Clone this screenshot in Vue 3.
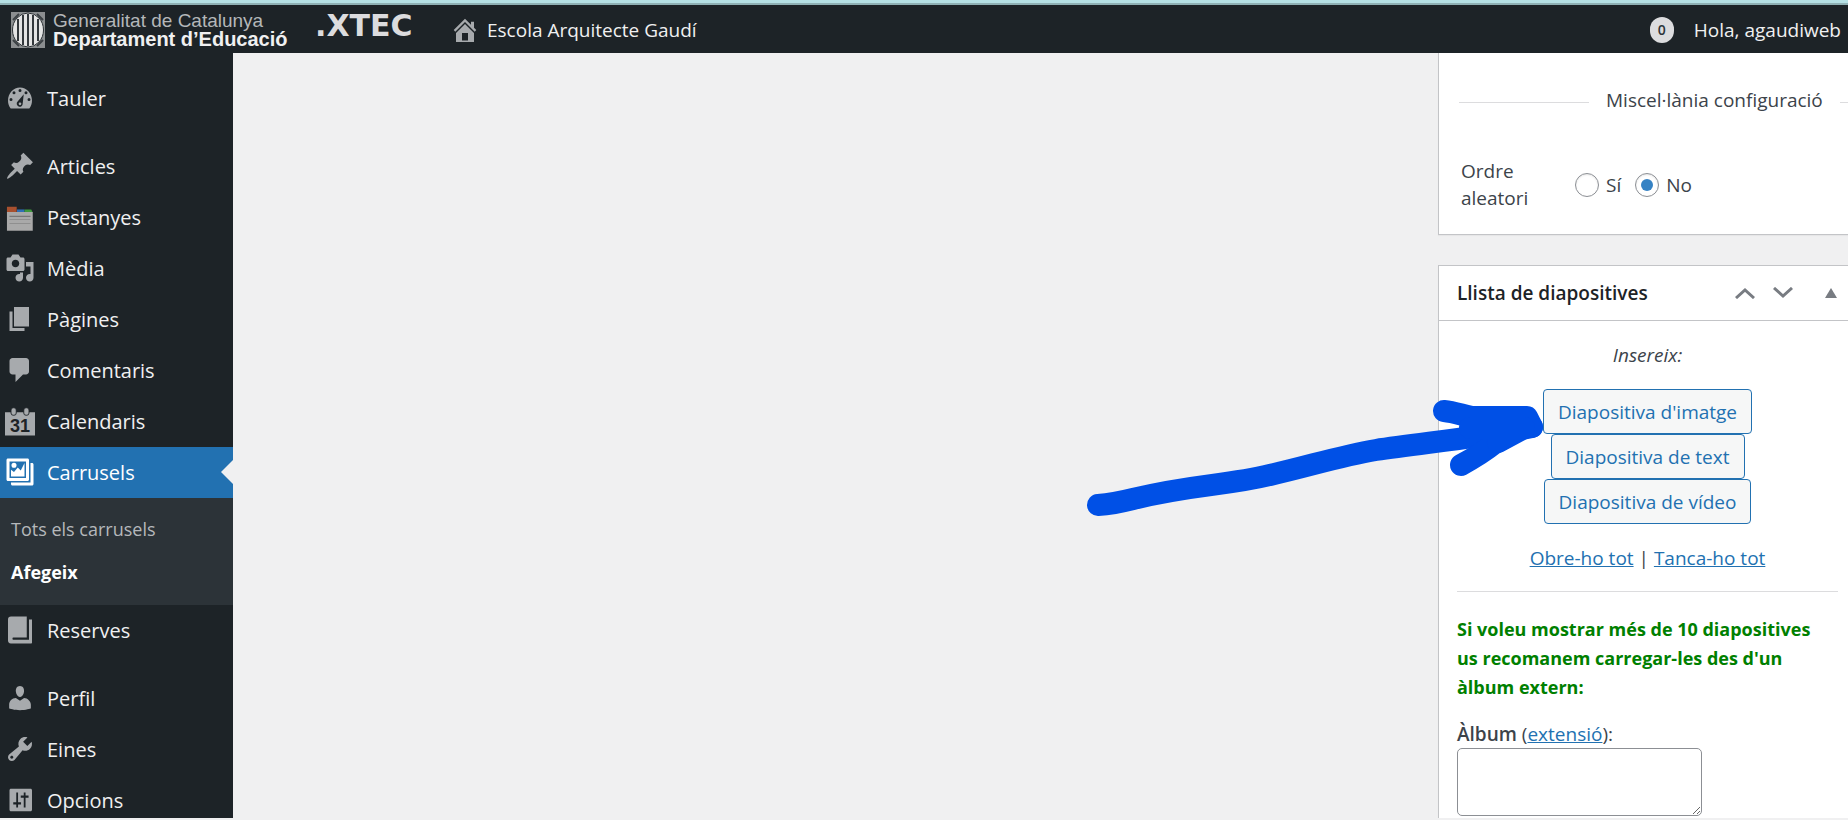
<template>
  <div class="page">
    <header class="adminbar">
      <a href="#" class="brand">
        <svg class="shield" viewBox="0 0 34 36" aria-hidden="true">
          <rect width="34" height="36" fill="#8b8e90" />
          <path d="M2 8L8 2M26 2l6 6M2 28l6 6M26 34l6-6" stroke="#3c4145" stroke-width="2" />
          <ellipse cx="17" cy="18" rx="15.5" ry="17" fill="#e4e4e4" stroke="#2b3034" />
          <path d="M7 7v22M12 3v30M17 2v32M22 3v30M27 7v22" stroke="#33383c" stroke-width="2" />
        </svg>
        <span class="brand-text">
          <span>Generalitat de Catalunya</span>
          <b>Departament d’Educació</b>
        </span>
      </a>
      <a href="#" class="xtec">.XTEC</a>
      <a href="#" class="site">
        <svg class="home" viewBox="0 0 20 20" aria-hidden="true">
          <path fill-rule="evenodd" d="M16 8.5l1.53 1.53-1.06 1.06L10 4.6l-6.47 6.49-1.06-1.06L10 2.5l4 4v-2h2v4zm-6-2.46l6 5.99V18H4v-5.97zM12 17v-5H8v5h4z" />
        </svg>
        Escola Arquitecte Gaudí
      </a>
      <div class="account">
        <span class="badge">0</span>
        <a href="#">Hola, agaudiweb</a>
      </div>
    </header>

    <div class="body">
      <nav class="menu">
        <template v-for="item in menu" :key="item.label">
          <a href="#" class="menu-item" :class="{ current: item.children, spaced: item.spaced }">
            <svg class="icon" :class="{ glyph: icons[item.icon] }" viewBox="0 0 20 20" aria-hidden="true">
              <template v-if="item.icon === 'tabs'">
                <path fill="#a8502f" d="M1.300 2.500h6.500v4H1.300z" />
                <path fill="#2f6fb5" d="M8 4.300h5v2H8z" />
                <path fill="#3f9a3f" d="M13 4.300h4.500l1 2H13z" />
                <path fill="#a9a9a9" d="M1.300 6h17.200v12.500H1.300z" />
                <path fill="#777" d="M3 8.500h14v.8H3zM3 11h14v.3H3zM3 13.500h14v.3H3z" />
              </template>
              <template v-else-if="item.icon === 'calendar'">
                <path fill="#a7aaad" d="M0 3.500h20V19H0z" />
                <rect x="4" y=".5" width="3.5" height="5" rx="1.5" fill="#a7aaad" stroke="#1d2327" stroke-width=".6" />
                <rect x="12.5" y=".5" width="3.5" height="5" rx="1.5" fill="#a7aaad" stroke="#1d2327" stroke-width=".6" />
                <text x="10" y="16.5" text-anchor="middle" class="day">31</text>
              </template>
              <path v-else fill-rule="evenodd" :d="icons[item.icon]" />
            </svg>
            <span>{{ item.label }}</span>
          </a>
          <div v-if="item.children" class="submenu">
            <a v-for="child in item.children" :key="child" href="#" :class="{ active: child === 'Afegeix' }">{{ child }}</a>
          </div>
        </template>
      </nav>

      <main class="content"></main>

      <aside class="side">
        <section class="box settings">
          <div class="legend"><span>Miscel·lània configuració</span></div>
          <div class="field" role="radiogroup" aria-labelledby="random-label">
            <span id="random-label" class="field-label">Ordre aleatori</span>
            <label><input v-model="random" type="radio" name="random" value="yes" />Sí</label>
            <label><input v-model="random" type="radio" name="random" value="no" />No</label>
          </div>
        </section>

        <section class="box slides">
          <div class="box-head">
            <h2>Llista de diapositives</h2>
            <button type="button" aria-label="Mou amunt">
              <svg viewBox="0 0 20 12"><path d="M1 11l9-8 9 8" /></svg>
            </button>
            <button type="button" aria-label="Mou avall">
              <svg viewBox="0 0 20 12"><path d="M1 1l9 8 9-8" /></svg>
            </button>
            <button type="button" class="toggle" aria-label="Commuta el quadre">
              <svg viewBox="0 0 12 10"><path d="M6 0l6 10H0z" /></svg>
            </button>
          </div>
          <div class="inside">
            <p class="insert">Insereix:</p>
            <div class="buttons">
              <button v-for="kind in kinds" :key="kind" type="button">{{ kind }}</button>
            </div>
            <p class="links"><a href="#">Obre-ho tot</a> | <a href="#">Tanca-ho tot</a></p>
            <hr />
            <p class="notice">Si voleu mostrar més de 10 diapositives us recomanem carregar-les des d'un àlbum extern:</p>
            <div class="album">
              <div><label for="album">Àlbum</label> (<a href="#">extensió</a>):</div>
              <textarea id="album" v-model="album"></textarea>
            </div>
          </div>
        </section>
      </aside>
    </div>

    <svg class="arrow" viewBox="1086 398 460 120" aria-hidden="true">
      <path d="M1098 505C1112 504 1121 502 1133 499C1195 484 1225 486 1270 475C1310 466 1340 456 1376 450C1420 443 1480 438 1532 427" />
      <path d="M1444 411C1454 412 1462 415 1472 417H1527L1532 427H1522C1510 434 1504 439 1495 443C1485 451 1474 458 1461 465" />
      <path d="M1470 428h54l-26 14" />
    </svg>
  </div>
</template>

<script setup>
import { ref } from "vue";

const random = ref("no");
const album = ref("");

const kinds = ["Diapositiva d'imatge", "Diapositiva de text", "Diapositiva de vídeo"];

const menu = [
  { label: "Tauler", icon: "dashboard" },
  { label: "Articles", icon: "pin", spaced: true },
  { label: "Pestanyes", icon: "tabs" },
  { label: "Mèdia", icon: "media" },
  { label: "Pàgines", icon: "page" },
  { label: "Comentaris", icon: "comment" },
  { label: "Calendaris", icon: "calendar" },
  { label: "Carrusels", icon: "gallery", children: ["Tots els carrusels", "Afegeix"] },
  { label: "Reserves", icon: "book" },
  { label: "Perfil", icon: "user", spaced: true },
  { label: "Eines", icon: "tools" },
  { label: "Opcions", icon: "settings" },
];

// 20x20 glyphs, holes cut with the even-odd rule
const icons = {
  dashboard:
    "M3.8 17h12.4C17.4 15.5 18 13.7 18 11.700 18 6.900 14.400 3 10 3s-8 3.900-8 8.700c0 2 .6 3.800 1.800 5.300zM10 4a1 1 0 1 1 0 2 1 1 0 0 1 0-2zM6 5.500a1 1 0 1 1 0 2 1 1 0 0 1 0-2zm8 0a1 1 0 1 1 0 2 1 1 0 0 1 0-2zM4 10a1 1 0 1 1 0 2 1 1 0 0 1 0-2zm12 0a1 1 0 1 1 0 2 1 1 0 0 1 0-2zM12.500 7.500l-.7 6.200a2 2 0 1 1-3.400-1.300zM10 13a.9.9 0 1 0 0 1.800.9.9 0 0 0 0-1.800z",
  pin: "M10.440 3.020l1.820-1.820 6.360 6.350-1.830 1.820c-1.050-.68-2.480-.57-3.410.36l-.75.75c-.92.93-1.040 2.350-.35 3.410l-1.830 1.820-2.410-2.410-2.800 2.790c-.42.42-3.380 2.710-3.800 2.290s1.860-3.390 2.280-3.810l2.790-2.790L4.100 9.360l1.830-1.820c1.050.69 2.480.57 3.400-.36l.75-.75c.93-.92 1.050-2.350.36-3.410z",
  media:
    "M13 11V4c0-.55-.45-1-1-1h-1.670L9 1H5L3.670 3H2c-.55 0-1 .45-1 1v7c0 .55.45 1 1 1h10c.55 0 1-.45 1-1zM7 4.500c1.380 0 2.500 1.120 2.500 2.500S8.380 9.500 7 9.500 4.500 8.380 4.500 7 5.620 4.500 7 4.500zM14 6h5v10.500c0 1.380-1.120 2.500-2.500 2.500S14 17.880 14 16.500s1.120-2.500 2.500-2.500c.17 0 .34.02.5.05V9h-3V6zm-4 8.050V13h2v3.500c0 1.380-1.120 2.500-2.500 2.500S7 17.880 7 16.500 8.120 14 9.500 14c.17 0 .34.02.5.05z",
  page: "M6 15V2h10v13H6zm-1 1h8v2H3V5h2v11z",
  comment: "M5 2h9c1.100 0 2 .9 2 2v7c0 1.100-.9 2-2 2h-2l-5 5v-5H5c-1.100 0-2-.9-2-2V4c0-1.100.9-2 2-2z",
  gallery:
    "M2 1h13c.6 0 1 .4 1 1v13c0 .6-.4 1-1 1H2c-.6 0-1-.4-1-1V2c0-.6.4-1 1-1zm1 2v11h11V3zm1 10V8.500l2 1.500 2.500-3 2 2L13 4v9zM6 3.800a1.700 1.700 0 1 1 0 3.400 1.700 1.700 0 0 1 0-3.400zM17 4h1c.6 0 1 .4 1 1v13c0 .6-.4 1-1 1H5c-.6 0-1-.4-1-1v-1h13z",
  book: "M4 1h10.500v14H5.500c-.7 0-.7 1.500 0 1.500H16V3h2v15.500c0 .3-.2.500-.5.500H4c-1.500 0-2-1-2-2V3c0-1.300.7-2 2-2z",
  user: "M10 9.250c-2.270 0-2.730-3.440-2.730-3.440C7 4.020 7.820 2 9.970 2c2.160 0 2.980 2.020 2.710 3.810 0 0-.41 3.440-2.680 3.440zm0 2.570L12.720 10c2.390 0 4.520 2.330 4.520 4.530v2.490s-3.650 1.130-7.240 1.130c-3.650 0-7.240-1.130-7.240-1.130v-2.490c0-2.250 1.940-4.480 4.470-4.480z",
  tools:
    "M16.680 9.770c-1.340 1.340-3.300 1.670-4.950.99l-5.410 6.520c-.99.99-2.590.99-3.580 0s-.99-2.590 0-3.570l6.520-5.420c-.68-1.650-.35-3.610.99-4.950 1.280-1.280 3.120-1.620 4.720-1.060l-2.890 2.890 2.820 2.820 2.860-2.870c.53 1.580.18 3.390-1.080 4.650zM3.810 16.210c.4.39 1.040.39 1.430 0 .4-.4.4-1.040 0-1.430-.39-.4-1.030-.4-1.430 0-.39.39-.39 1.030 0 1.430z",
  settings:
    "M4 2.500h13c.6 0 1 .4 1 1v13c0 .6-.4 1-1 1H4c-.6 0-1-.4-1-1v-13c0-.6.4-1 1-1zM7.500 5v6.500h-2V13h2v2h1.200v-2h2v-1.500h-2V5zm5 0v2h-2v1.500h2V15h1.200V8.500h2V7h-2V5z",
};
</script>

<style>
body {
  margin: 0;
  background: #f0f0f1;
}
</style>

<style scoped>
.page {
  position: relative;
  display: flex;
  flex-direction: column;
  box-sizing: border-box;
  height: 100vh;
  overflow: hidden;
  border-bottom: 2px solid #f0f0f1;
  font-family: "Open Sans", "Noto Sans", sans-serif;
  font-size: 19px;
  color: #3c434a;
}

a {
  color: #2271b1;
}

.adminbar {
  display: flex;
  flex: none;
  align-items: center;
  height: 46px;
  padding: 4px 7px 0 11px;
  border-top: 3px solid #b5e0e4;
  background: #1d2327;
  box-shadow: inset 0 2px #8fb0b4;
}

.adminbar a {
  color: #f0f0f1;
  text-decoration: none;
}

.adminbar .brand {
  display: flex;
  gap: 8px;
  width: 304px;
}

.shield {
  width: 34px;
  height: 36px;
}

.brand-text {
  display: flex;
  flex-direction: column;
  font-family: "Liberation Sans", Arial, sans-serif;
  font-size: 19px;
  line-height: 18px;
  white-space: nowrap;
}

.brand-text span {
  color: #b4b7b9;
}

.brand-text b {
  font-size: 20px;
}

.adminbar .xtec {
  width: 135px;
  padding-bottom: 8px;
  color: #dcdcde;
  font: bold 30px/28px "DejaVu Sans", sans-serif;
}

.site {
  display: flex;
  align-items: center;
  gap: 7px;
}

.home {
  width: 30px;
  height: 30px;
  fill: #a7aaad;
}

.account {
  display: flex;
  align-items: center;
  gap: 20px;
  margin-left: auto;
}

.badge {
  width: 24px;
  border-radius: 12px;
  background: #dcdcde;
  color: #2c3338;
  font-size: 14px;
  font-weight: 600;
  line-height: 26px;
  text-align: center;
}

.body {
  display: flex;
  flex: 1;
  min-height: 0;
}

.menu {
  flex: 0 0 233px;
  overflow: hidden;
  box-sizing: border-box;
  padding-top: 20px;
  background: #1d2327;
}

.menu a {
  color: #f0f0f1;
  text-decoration: none;
}

.menu-item {
  position: relative;
  display: flex;
  align-items: center;
  gap: 12px;
  height: 51px;
  padding-left: 5px;
  font-size: 20px;
}

.spaced {
  margin-top: 17px;
}

.icon {
  width: 30px;
  height: 30px;
  fill: #a7aaad;
}

.glyph {
  padding-bottom: 2px;
}

.day {
  font: bold 12px "Liberation Sans", Arial, sans-serif;
  fill: #1d2327;
}

.menu .current {
  background: #2271b1;
  color: #fff;
}

.current .icon {
  fill: #fff;
}

.current::after {
  content: "";
  position: absolute;
  right: 0;
  top: 13px;
  border: 12px solid transparent;
  border-right-color: #f0f0f1;
  border-left: 0;
}

.submenu {
  display: flex;
  flex-direction: column;
  padding: 10px 0 11px 11px;
  background: #2c3338;
  font-size: 18px;
  line-height: 43px;
}

.submenu a {
  color: #b5b8bb;
}

.submenu .active {
  color: #fff;
  font-weight: 700;
}

.content {
  flex: 1;
}

.side {
  flex: 0 0 410px;
  display: flex;
  flex-direction: column;
  gap: 30px;
}

.box {
  border: 1px solid #c3c4c7;
  border-right: 0;
  background: #fff;
  box-shadow: 0 1px 1px rgba(0, 0, 0, 0.04);
}

.settings {
  border-top: 0;
  padding: 32px 0 22px 20px;
}

.legend {
  display: flex;
  align-items: center;
  gap: 17px;
  line-height: 30px;
  white-space: nowrap;
}

.legend::before,
.legend::after {
  content: "";
  height: 1px;
  margin-top: 4px;
  background: #dcdcde;
}

.legend::before {
  width: 130px;
}

.legend::after {
  flex: 1;
}

.field {
  display: flex;
  align-items: center;
  gap: 14px;
  margin-top: 43px;
  line-height: 27px;
}

.field-label {
  box-sizing: border-box;
  width: 102px;
  padding-left: 2px;
}

.field label {
  display: flex;
  align-items: center;
  gap: 7px;
}

.field input {
  display: grid;
  place-items: center;
  appearance: none;
  width: 24px;
  height: 24px;
  margin: 0;
  border: 1px solid #8c8f94;
  border-radius: 50%;
  background: #fff;
  box-shadow: inset 0 1px 2px rgba(0, 0, 0, 0.1);
}

.field input:checked::before {
  content: "";
  width: 12px;
  height: 12px;
  border-radius: 50%;
  background: #3582c4;
}

.slides {
  flex: 1;
  border-bottom: 0;
}

.box-head {
  display: flex;
  align-items: center;
  height: 54px;
  padding: 0 11px 0 18px;
  border-bottom: 1px solid #c3c4c7;
}

.box-head h2 {
  flex: 1;
  margin: 0;
  color: #1d2327;
  font-size: 19px;
  font-weight: 600;
}

.box-head button {
  display: flex;
  padding: 0;
  margin-left: 18px;
  border: 0;
  background: none;
}

.box-head svg {
  width: 20px;
  height: 12px;
  fill: none;
  stroke: #787c82;
  stroke-width: 3;
}

.box-head .toggle {
  margin-left: 32px;
}

.box-head .toggle svg {
  width: 12px;
  height: 10px;
  fill: #787c82;
  stroke: none;
}

.inside {
  padding: 20px 10px 0 18px;
}

.inside p {
  margin: 0;
  line-height: 29px;
}

.insert {
  font-style: italic;
  text-align: center;
}

.buttons {
  display: flex;
  flex-direction: column;
  align-items: center;
  padding: 19px 0 20px;
}

.buttons button {
  height: 45px;
  padding: 0 14px;
  border: 1px solid #2271b1;
  border-radius: 4px;
  background: #f6f7f7;
  color: #2271b1;
  font: inherit;
}

.links {
  text-align: center;
}

hr {
  height: 1px;
  margin: 18px 0 23px;
  border: 0;
  background: #dcdcde;
}

.inside .notice {
  color: #008000;
  font-size: 18px;
  font-weight: 700;
  padding-right: 12px;
}

.album {
  margin-top: 18px;
  line-height: 28px;
}

.album label {
  font-weight: 600;
}

.album textarea {
  display: block;
  box-sizing: border-box;
  width: 245px;
  height: 68px;
  border: 1px solid #8c8f94;
  border-radius: 5px;
  background: #fff;
  font: inherit;
}

.arrow {
  position: absolute;
  top: 398px;
  right: 302px;
  width: 460px;
  height: 120px;
  fill: none;
  stroke: #0050e6;
  stroke-width: 22;
  stroke-linecap: round;
  stroke-linejoin: round;
  pointer-events: none;
}
</style>
